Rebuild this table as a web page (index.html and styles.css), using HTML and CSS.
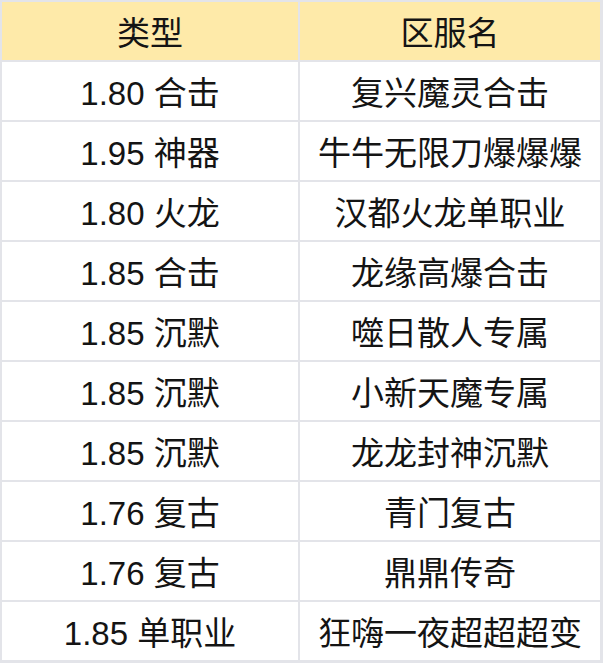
FILE: index.html
```html
<!DOCTYPE html>
<html lang="zh">
<head>
<meta charset="utf-8">
<link rel="stylesheet" href="styles.css">
</head>
<body>
<div class="table">
  <div class="cell head">类型</div><div class="cell head">区服名</div>
  <div class="cell">1.80 合击</div><div class="cell">复兴魔灵合击</div>
  <div class="cell">1.95 神器</div><div class="cell">牛牛无限刀爆爆爆</div>
  <div class="cell">1.80 火龙</div><div class="cell">汉都火龙单职业</div>
  <div class="cell">1.85 合击</div><div class="cell">龙缘高爆合击</div>
  <div class="cell">1.85 沉默</div><div class="cell">噬日散人专属</div>
  <div class="cell">1.85 沉默</div><div class="cell">小新天魔专属</div>
  <div class="cell">1.85 沉默</div><div class="cell">龙龙封神沉默</div>
  <div class="cell">1.76 复古</div><div class="cell">青门复古</div>
  <div class="cell">1.76 复古</div><div class="cell">鼎鼎传奇</div>
  <div class="cell">1.85 单职业</div><div class="cell">狂嗨一夜超超超变</div>
</div>
</body>
</html>
```
FILE: styles.css
```css
html, body {
  margin: 0;
  padding: 0;
  background: #ffffff;
}
.table {
  display: grid;
  grid-template-columns: 296px 300px;
  grid-auto-rows: 58px;
  gap: 2px;
  padding: 2px 3px 3px 2px;
  width: 603px;
  box-sizing: border-box;
  background: #e3e4e9;
}
.cell {
  background: #ffffff;
  display: flex;
  align-items: center;
  justify-content: center;
  font-family: "Liberation Sans", "Noto Sans CJK SC", sans-serif;
  font-size: 33px;
  color: #141414;
  white-space: nowrap;
}
.cell.head {
  background: #feeaa9;
}
```
